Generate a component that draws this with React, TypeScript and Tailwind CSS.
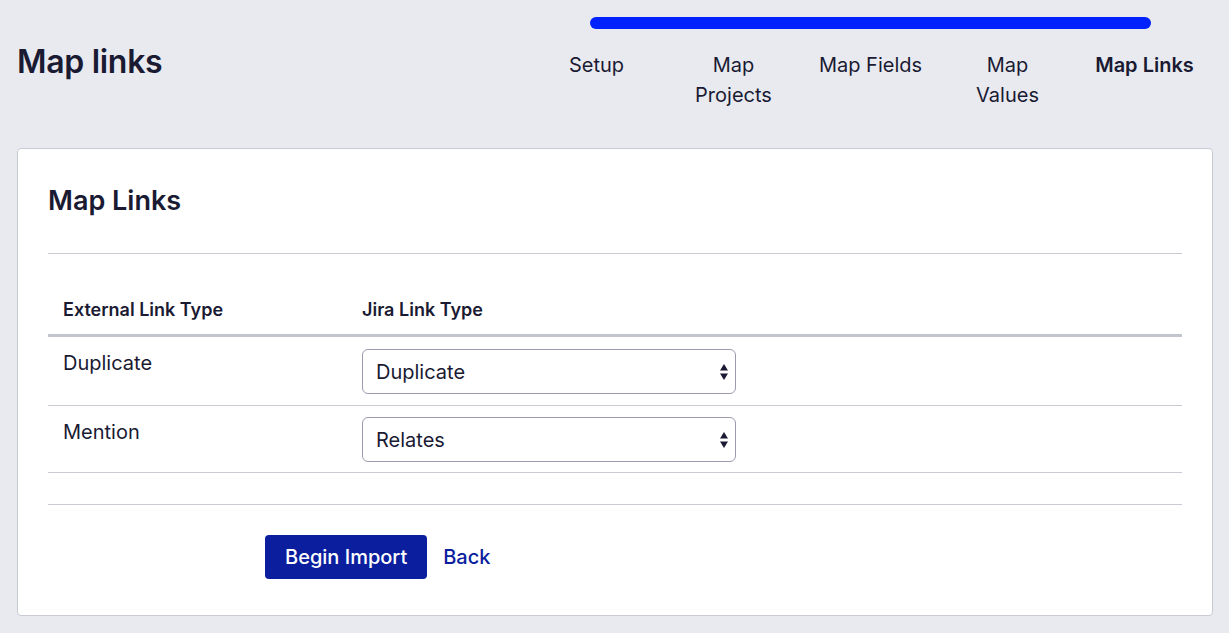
import React from "react";

const font = { fontFamily: "Inter, 'Noto Sans', 'Liberation Sans', sans-serif" };

function Arrows() {
  return (
    <svg width="10" height="18" viewBox="0 0 10 18" className="absolute right-[6px] top-1/2 -translate-y-1/2">
      <path d="M5 1 L9 7.5 L1 7.5 Z" fill="#1a1a33" />
      <path d="M5 17 L9 10.5 L1 10.5 Z" fill="#1a1a33" />
    </svg>
  );
}

function Select({ value }: { value: string }) {
  return (
    <div className="relative w-[374px] h-[45px] rounded-[6px] border border-[#9a9cad] bg-white flex items-center pl-[13px] text-[20px] text-[#1a1a33]">
      {value}
      <Arrows />
    </div>
  );
}

export default function App() {
  const steps = [
    { label: "Setup", bold: false },
    { label: "Map Projects", bold: false, wrap: true },
    { label: "Map Fields", bold: false },
    { label: "Map Values", bold: false, wrap: true },
    { label: "Map Links", bold: true },
  ];
  return (
    <div style={font} className="w-[1229px] h-[633px] bg-[#e9eaf0] text-[#1a1a33] overflow-hidden">
      <div className="flex justify-between pl-[17px] pr-[16px]">
        <h1 className="mt-[40px] text-[32px] leading-[44px] font-semibold tracking-[-0.3px]">Map links</h1>
        <div className="w-[685px] pt-[17px]">
          <div className="mx-[62px] h-[12px] rounded-full bg-[#0022ff]" />
          <div className="mt-[21px] grid grid-cols-5">
            {steps.map((s) => (
              <div
                key={s.label}
                className={`text-center text-[20px] leading-[30px] ${s.bold ? "font-semibold" : "font-normal"}`}
              >
                {s.wrap ? (
                  <>
                    {s.label.split(" ")[0]}
                    <br />
                    {s.label.split(" ")[1]}
                  </>
                ) : (
                  s.label
                )}
              </div>
            ))}
          </div>
        </div>
      </div>
      <div className="ml-[17px] mr-[16px] mt-[38px] h-[468px] bg-white border border-[#c9cbd4] rounded-[4px] px-[30px] pt-[32px]">
        <h2 className="text-[27px] leading-[40px] font-semibold">Map Links</h2>
        <div className="mt-[32px] border-t border-[#c9cbd4]" />
        <table className="mt-[32px] w-full border-collapse">
          <thead>
            <tr className="border-b-[3px] border-[#c3c5ce]">
              <th className="w-[299px] text-left pl-[15px] pt-[12px] pb-[12px] text-[18px] leading-[24px] font-semibold">External Link Type</th>
              <th className="text-left pl-[15px] pt-[12px] pb-[12px] text-[18px] leading-[24px] font-semibold">Jira Link Type</th>
            </tr>
          </thead>
          <tbody>
            <tr className="border-b border-[#c9cbd4]">
              <td className="align-top pl-[15px] pt-[12px] text-[20px] leading-[28px]">Duplicate</td>
              <td className="align-top pl-[15px] pt-[12px] pb-[11px]"><Select value="Duplicate" /></td>
            </tr>
            <tr className="border-b border-[#c9cbd4]">
              <td className="align-top pl-[15px] pt-[12px] text-[20px] leading-[28px]">Mention</td>
              <td className="align-top pl-[15px] pt-[11px] pb-[10px]"><Select value="Relates" /></td>
            </tr>
          </tbody>
        </table>
        <div className="mt-[31px] border-t border-[#c9cbd4]" />
        <div className="mt-[30px] pl-[217px] flex items-center gap-[16px]">
          <button className="h-[44px] px-[20px] rounded-[4px] bg-[#0a1e9e] text-white text-[20px] font-medium">Begin Import</button>
          <a className="text-[20px] text-[#0a1e9e] font-medium">Back</a>
        </div>
      </div>
    </div>
  );
}
